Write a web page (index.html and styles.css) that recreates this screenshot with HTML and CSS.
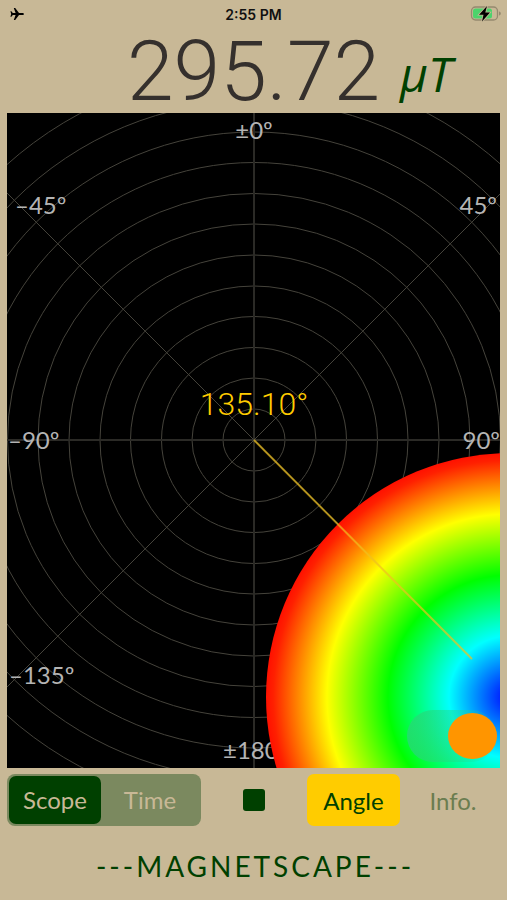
FILE: index.html
```
<!DOCTYPE html>
<html lang="en">

<head>
    <meta charset="UTF-8">
    <meta name="viewport" content="width=device-width, initial-scale=1.0">
    <title>Magnetscape</title>
    <link rel="stylesheet" href="styles.css">
</head>

<body>
    <header class="status">
        <svg class="plane" viewBox="0 0 14 14" aria-label="Airplane mode">
            <path d="M14 7c0-.7-.8-1.1-1.8-1.1H9L5.2 1H3.8l1.8 4.9H2.8L1.4 4.2H.4L1.2 7 .4 9.800h1l1.400-1.700h2.800L3.800 13h1.400L9 8.100h3.200C13.200 8.100 14 7.700 14 7z" />
        </svg>
        <span class="time">2:55 PM</span>
        <svg class="battery" viewBox="0 0 32 18" aria-label="Battery charging">
            <rect x="1.500" y="2" width="26" height="13" rx="4" fill="none" stroke="#95896f" stroke-width="1.300" />
            <rect x="3" y="3.500" width="19" height="10" rx="2.500" fill="#4bd36b" />
            <path d="M29 6.500c2.400.5 2.400 3.500 0 4z" fill="#95896f" />
            <path d="M17 1L9 9.800h4.500L12 16.500l8-9h-4.700z" stroke="#c8b896" stroke-width="1.600" paint-order="stroke" />
        </svg>
    </header>

    <main>
        <div class="reading">
            <span class="value">295.72</span>
            <span class="unit">μT</span>
        </div>

        <div class="scope">
            <svg class="dial" viewBox="0 0 493 655">
                <defs>
                    <radialGradient id="field">
                        <stop offset="0" stop-color="#00f" />
                        <stop offset="0.25" stop-color="#0ff" />
                        <stop offset="0.5" stop-color="#0f0" />
                        <stop offset="0.75" stop-color="#ff0" />
                        <stop offset="0.97" stop-color="#ff2000" />
                        <stop offset="1" stop-color="#ff1000" />
                    </radialGradient>
                </defs>
                <g class="grid">
                    <circle cx="247" cy="327" r="31" />
                    <circle cx="247" cy="327" r="62" />
                    <circle cx="247" cy="327" r="92.500" />
                    <circle cx="247" cy="327" r="123.500" />
                    <circle cx="247" cy="327" r="154" />
                    <circle cx="247" cy="327" r="185" />
                    <circle cx="247" cy="327" r="216" />
                    <circle cx="247" cy="327" r="246.500" />
                    <circle cx="247" cy="327" r="277.500" />
                    <circle cx="247" cy="327" r="308" />
                    <circle cx="247" cy="327" r="339" />
                    <circle cx="247" cy="327" r="370" />
                    <path class="axis" d="M247 0V655M0 327H493" />
                    <path d="M0 80L493 573M0 574L493 81" />
                </g>
                <g class="labels">
                    <text x="247" y="26" text-anchor="middle">±0º</text>
                    <text x="8" y="101">–45º</text>
                    <text x="490" y="101" text-anchor="end">45º</text>
                    <text x="1" y="336">–90º</text>
                    <text x="493" y="336" text-anchor="end">90º</text>
                    <text x="2" y="571">–135º</text>
                    <text x="216" y="646">±180º</text>
                </g>
                <circle cx="503" cy="584" r="244" fill="url(#field)" />
                <path class="needle" d="M247 327L465 546" />
                <text class="angle" x="247" y="302" text-anchor="middle">135.10°</text>
            </svg>
            <input class="switch" type="checkbox" checked aria-label="Show field">
        </div>

        <div class="controls">
            <div class="segments">
                <input type="radio" name="view" id="view-scope" checked>
                <label for="view-scope">Scope</label>
                <input type="radio" name="view" id="view-time">
                <label for="view-time">Time</label>
            </div>
            <button class="stop" type="button" aria-label="Stop"></button>
            <button class="angle-btn" type="button">Angle</button>
            <button class="info" type="button">Info.</button>
        </div>
    </main>

    <h1>---MAGNETSCAPE---</h1>
</body>

</html>
```
FILE: styles.css
```
* {
    box-sizing: border-box;
}

body {
    margin: 0;
    background-color: #c8b896;
    color: #004000;
    font-family: Lato, sans-serif;
}

.status {
    display: grid;
    grid-template-columns: 1fr auto 1fr;
    align-items: center;
    height: 28px;
    padding: 0 5px;
}

.plane {
    width: 14px;
    height: 14px;
    margin-left: 5px;
}

.time {
    color: #111;
    font: 600 14px Inter, sans-serif;
}

.battery {
    width: 32px;
    height: 18px;
    justify-self: end;
}

main {
    padding: 0 7px;
}

.reading {
    display: flex;
    justify-content: flex-end;
    align-items: flex-start;
    gap: 20px;
    height: 85px;
    padding-right: 48px;
}

.value {
    color: #35302d;
    font-family: Roboto, sans-serif;
    font-weight: 300;
    font-size: 84px;
    line-height: 88px;
}

.unit {
    font-family: "Open Sans", sans-serif;
    font-style: italic;
    font-size: 48px;
    line-height: 92px;
}

.scope {
    position: relative;
    background-color: #000;
}

.dial {
    display: block;
    width: 100%;
}

.grid {
    fill: none;
    stroke: #45433b;
    stroke-width: 1px;
}

.axis {
    stroke-width: 2px;
    stroke: #2b2a26;
}

.labels {
    fill: #b4b4b4;
    font-size: 24px;
}

.needle {
    stroke: #f0c020;
    stroke-opacity: 0.7;
    stroke-width: 2px;
}

.angle {
    fill: #ffcc00;
    font-family: Roboto, sans-serif;
    font-weight: 300;
    font-size: 32px;
}

/* Switch lies over the lower right corner of the dial */
.switch {
    appearance: none;
    position: absolute;
    right: 3px;
    bottom: 6px;
    display: flex;
    justify-content: flex-end;
    align-items: center;
    width: 90px;
    height: 52px;
    margin: 0;
    border-radius: 26px;
    background: linear-gradient(to right, rgba(40, 215, 120, 0.8), rgba(40, 210, 200, 0.05));
}

.switch::before {
    content: "";
    width: 49px;
    height: 46px;
    border-radius: 50%;
    background-color: #ff9500;
}

.controls {
    display: flex;
    align-items: center;
    padding-top: 6px;
}

.segments {
    display: flex;
    width: 194px;
    height: 52px;
    padding: 2px;
    border-radius: 8px;
    background-color: #7b895f;
}

.segments input {
    appearance: none;
    position: absolute;
    margin: 0;
}

.segments label {
    flex: 1;
    border-radius: 7px;
    color: #c8b896;
    font-size: 24px;
    line-height: 48px;
    text-align: center;
}

.segments input:checked + label {
    flex: 0 0 92px;
    background-color: #004000;
}

button {
    padding: 0;
    border: 0;
    background: none;
    color: inherit;
    font-family: inherit;
    font-size: 24px;
}

.stop {
    width: 22px;
    height: 22px;
    margin: 0 auto;
    border-radius: 3px;
    background-color: #004000;
}

.angle-btn {
    width: 93px;
    height: 52px;
    border-radius: 7px;
    background-color: #ffcc00;
}

.info {
    width: 100px;
    height: 52px;
    padding-left: 6px;
    color: #6b7d50;
}

h1 {
    margin: 18px 0 0;
    padding-left: 3px;
    font-size: 28px;
    font-weight: normal;
    line-height: 44px;
    letter-spacing: 3px;
    text-align: center;
}
```
